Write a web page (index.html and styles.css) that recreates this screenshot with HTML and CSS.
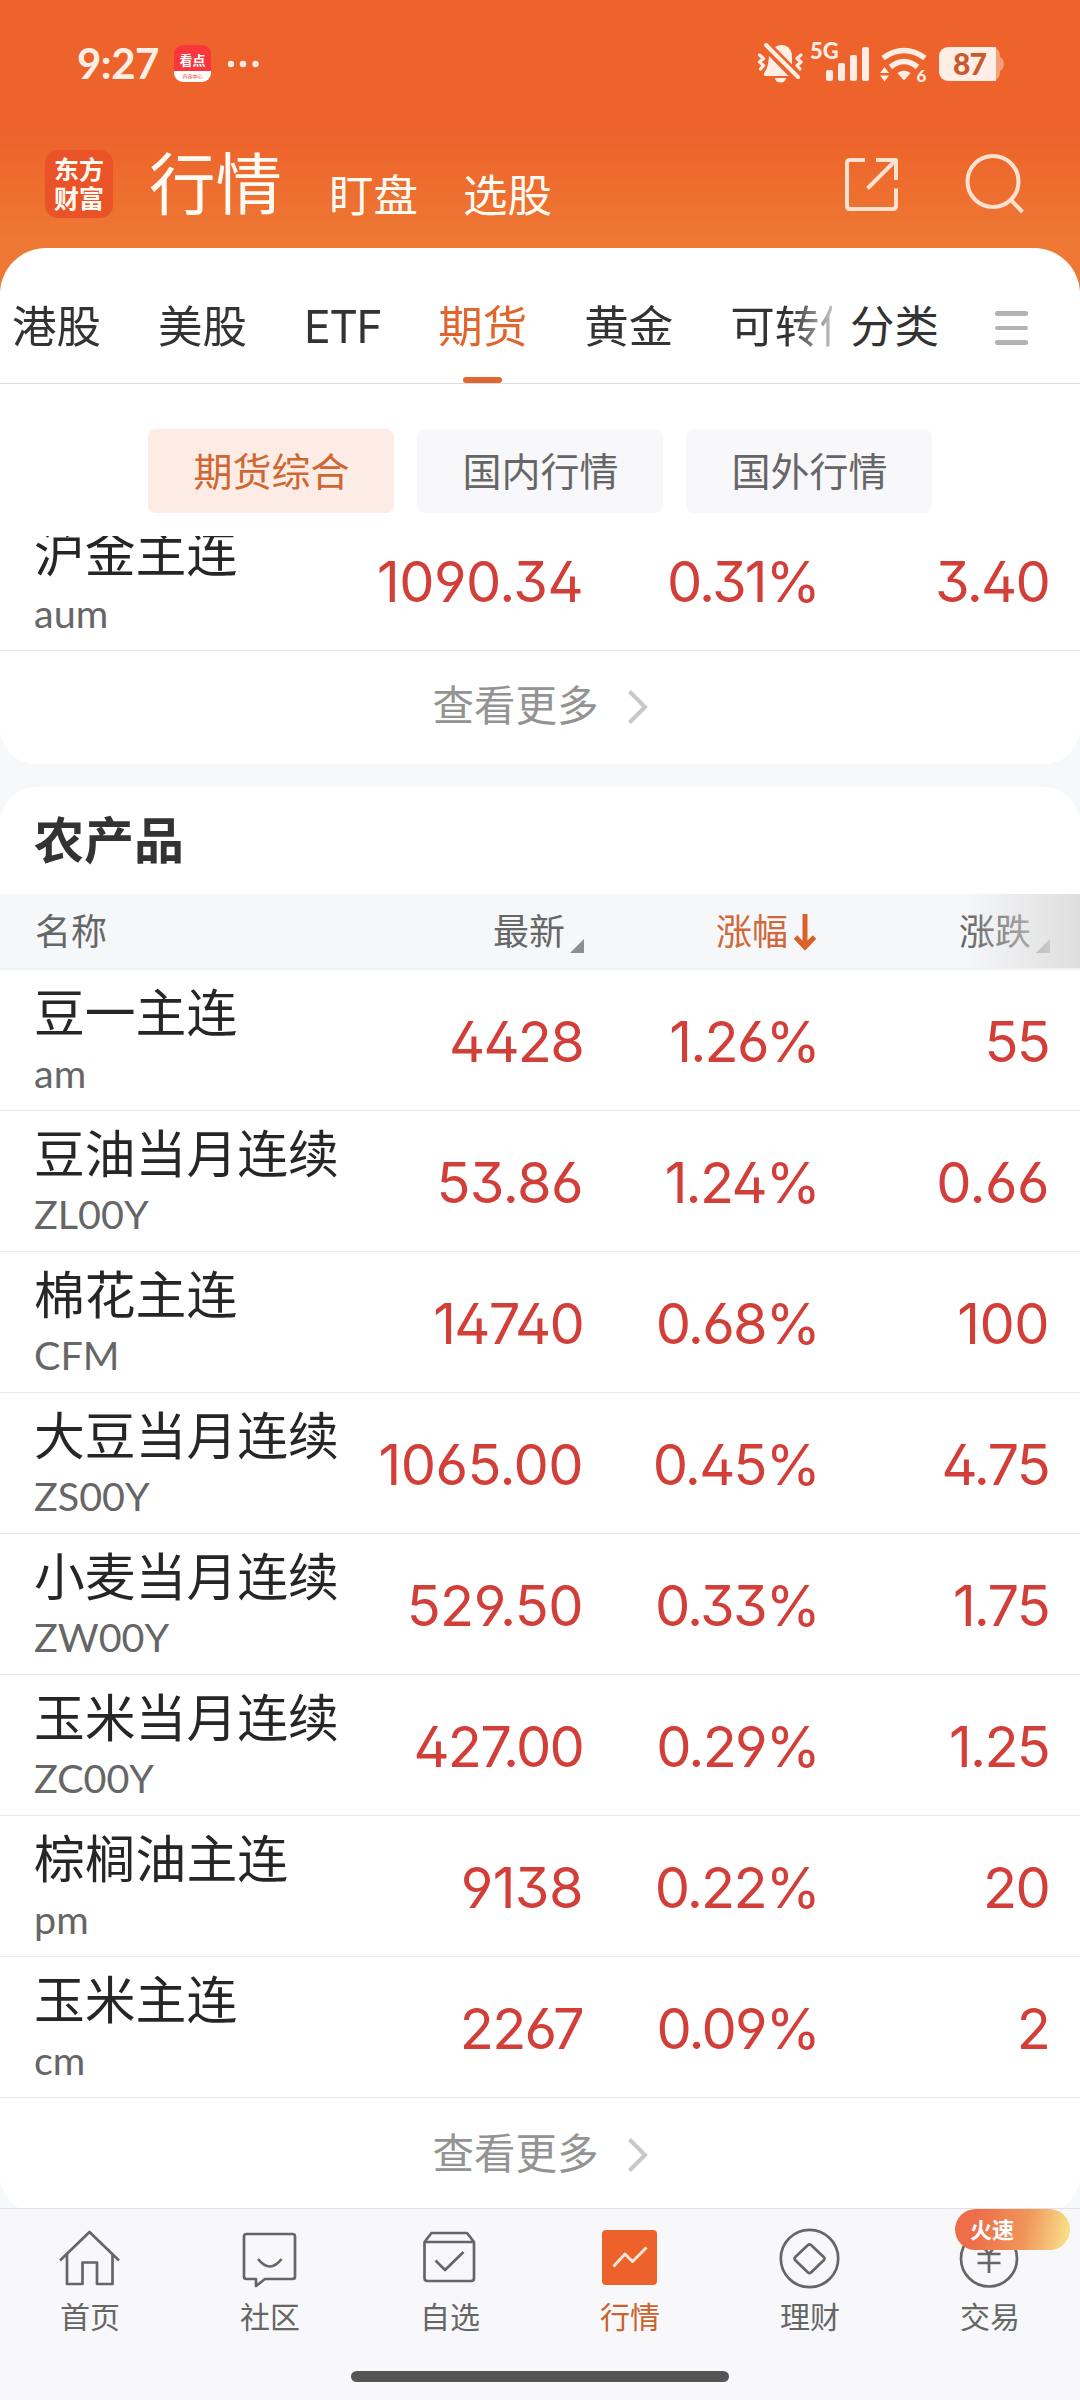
FILE: index.html
```html
<!DOCTYPE html>
<html lang="zh-CN">
<head>
<meta charset="utf-8">
<title>行情</title>
<link rel="stylesheet" href="styles.css">
</head>
<body>
<div class="screen">
  <header class="top">
    <div class="status">
      <span class="clock">9:27</span>
      <span class="app-badge"><b>看点</b><i>内容中心</i></span>
      <svg class="dots" width="32" height="8" viewBox="0 0 32 8"><circle cx="4" cy="4" r="3.2"/><circle cx="16" cy="4" r="3.2"/><circle cx="28.500" cy="4" r="3.2"/></svg>
      <svg class="status-icons" width="256" height="50" viewBox="754 38 256 50">
        <g fill="#ffeee6">
          <path d="M775 46q5-3 10-1.500 7 3 7 11v8z"/>
          <path d="M769 55L788.500 75h-24q-1.500-1.500 0-3.500 4-5.500 4.500-16.500z"/>
          <path d="M775 77h11a5.500 4.500 0 0 1-11 0z"/>
        </g>
        <g fill="none" stroke="#ffeee6" stroke-width="3.200" stroke-linecap="round" stroke-linejoin="round">
          <path d="M766 44l32 32" stroke-width="4"/>
          <path d="M759.500 54l4 3.500-4 3.500 4 3.500-3 3.500M801 54l-4 3.500 4 3.500-4 3.500 3 3.500"/>
        </g>
        <text class="net" x="810" y="57.500">5G</text>
        <g fill="#ffeee6">
          <rect x="826" y="69" width="7" height="11" rx="2"/><rect x="838" y="62" width="7" height="18" rx="2"/><rect x="850" y="54" width="7" height="26" rx="2"/><rect x="862" y="46" width="7" height="34" rx="2"/>
          <path d="M897.500 72q6.500-5 13 0l-5 6q-1.500 1.500-3 0z"/>
          <path d="M880 72l4.500-6 4.500 6zM880 74.500l4.500 6 4.500-6z"/>
        </g>
        <path d="M883 57q21-15 42 0M890.500 66q13.500-11 27 0" fill="none" stroke="#ffeee6" stroke-width="5.500"/>
        <text class="wifi-gen" x="916.500" y="81">6</text>
        <path d="M990 46q10 0 10 9v1q4 2 4 7t-4 7v1q0 9-10 9z" fill="#f4a07d"/>
        <path d="M948 46h48v34h-48a9 9 0 0 1-9-9V55a9 9 0 0 1 9-9z" fill="#ffeee6"/>
        <text class="charge" x="953" y="74">87</text>
      </svg>
    </div>
    <div class="title-bar">
      <span class="logo"><span>东方</span><span>财富</span></span>
      <h1>行情</h1>
      <span class="sub">盯盘</span>
      <span class="sub">选股</span>
      <svg class="actions" width="190" height="68" viewBox="840 150 190 68" fill="none" stroke="#ffe3d0" stroke-width="4">
        <path d="M865 160h-15q-3 0-3 3v43q0 3 3 3h43q3 0 3-3v-17.500M876 160h20v20M896 160l-28.500 28.500" stroke-linejoin="round"/>
        <circle cx="993" cy="181.500" r="25.500"/><path d="M1010.500 199.500l12 12.500"/>
      </svg>
    </div>
  </header>

  <main class="sheet">
    <nav class="tabs">
      <div class="tab-strip">
        <span>港股</span><span>美股</span><span class="latin">ETF</span><span class="on">期货</span><span>黄金</span><span>可转债</span>
      </div>
      <span class="category">分类</span>
      <span class="menu"><i></i><i></i><i></i></span>
    </nav>
    <div class="pills"><span class="on">期货综合</span><span>国内行情</span><span>国外行情</span></div>

    <div class="scroll">
      <section class="card first">
        <div class="row"><div class="name">沪金主连<small>aum</small></div><b class="loose">1090.34</b><b>0.31%</b><b>3.40</b></div>
        <div class="more">查看更多<svg width="22" height="36" viewBox="0 0 22 36"><path d="M2.500 2.500L18 18 2.500 33.500"/></svg></div>
      </section>
      <section class="card">
        <h2>农产品</h2>
        <div class="head">
          <span>名称</span>
          <span class="col">最新<i class="tri"></i></span>
          <span class="col sorted">涨幅<svg width="24" height="38" viewBox="0 0 24 38"><path d="M12 1v32M2.500 24L12 34l9.500-10"/></svg></span>
          <span class="col">涨跌<i class="tri"></i></span>
        </div>
        <div class="row"><div class="name">豆一主连<small>am</small></div><b>4428</b><b>1.26%</b><b>55</b></div>
        <div class="row"><div class="name">豆油当月连续<small>ZL00Y</small></div><b class="loose">53.86</b><b>1.24%</b><b class="loose">0.66</b></div>
        <div class="row"><div class="name">棉花主连<small>CFM</small></div><b>14740</b><b>0.68%</b><b class="loose">100</b></div>
        <div class="row"><div class="name">大豆当月连续<small>ZS00Y</small></div><b class="loose">1065.00</b><b>0.45%</b><b>4.75</b></div>
        <div class="row"><div class="name">小麦当月连续<small>ZW00Y</small></div><b class="loose">529.50</b><b>0.33%</b><b>1.75</b></div>
        <div class="row"><div class="name">玉米当月连续<small>ZC00Y</small></div><b>427.00</b><b>0.29%</b><b>1.25</b></div>
        <div class="row"><div class="name">棕榈油主连<small>pm</small></div><b class="loose">9138</b><b>0.22%</b><b>20</b></div>
        <div class="row"><div class="name">玉米主连<small>cm</small></div><b>2267</b><b>0.09%</b><b>2</b></div>
        <div class="more">查看更多<svg width="22" height="36" viewBox="0 0 22 36"><path d="M2.500 2.500L18 18 2.500 33.500"/></svg></div>
      </section>
    </div>
  </main>

  <footer class="dock">
    <div class="item"><svg width="64" height="64" viewBox="58 2226 64 64"><path d="M60 2260.500L89.500 2232l29.500 28.500M67 2254v30h15.500v-21.500h14.500v21.500h15.500v-30"/></svg>首页</div>
    <div class="item"><svg width="64" height="64" viewBox="238 2226 64 64"><path d="M246.500 2234h46q2.500 0 2.500 2.500v40q0 2.500-2.500 2.500H265l-9 7v-7h-9.500q-2.500 0-2.500-2.500v-40q0-2.500 2.500-2.500zM258 2259q12 15 23.500 0"/></svg>社区</div>
    <div class="item"><svg width="64" height="64" viewBox="418 2226 64 64"><path d="M424.500 2242l7-9h35.500l7 9v36q0 3-3 3H427.500q-3 0-3-3zM424.500 2242h49.500M435.500 2260.500l9.500 9.500 18.500-18"/></svg>自选</div>
    <div class="item on"><svg width="64" height="64" viewBox="598 2226 64 64"><rect x="602" y="2230" width="55" height="55" rx="4"/><path d="M613.500 2266.500L625 2254l7.500 7.500 14-14"/></svg>行情</div>
    <div class="item"><svg width="64" height="64" viewBox="778 2226 64 64"><circle cx="809.500" cy="2258.500" r="28.700"/><path d="M807.700 2245.300q1.800-2 3.600 0l12.400 11.700q1.800 1.500 0 3.300l-12.400 12q-1.800 1.700-3.600 0l-12.400-12q-1.800-1.800 0-3.300z"/></svg>理财</div>
    <div class="item"><svg width="64" height="64" viewBox="958 2226 64 64"><circle cx="989" cy="2258.500" r="28"/><path d="M977.500 2254h23M977.500 2263h23M989 2254v19M980 2243l9 11 9-11"/></svg>交易<em class="hot">火速</em></div>
    <div class="home-bar"></div>
  </footer>
</div>
</body>
</html>
```
FILE: styles.css
```css
* { box-sizing: border-box; }
body { margin: 0; font-family: Inter, "Noto Sans CJK SC", sans-serif; color: #333; }
i, em { font-style: normal; }
.screen { width: 1080px; height: 2400px; display: flex; flex-direction: column; overflow: hidden; background: linear-gradient(#ed632b 135px, #ee7834 240px); }

.top { height: 248px; flex: none; }
.status { height: 127px; display: flex; align-items: center; padding-left: 77px; }
.clock { width: 97px; font: 700 42px/46px Lato, sans-serif; letter-spacing: -0.500px; color: #ffeee6; padding-bottom: 2px; }
.app-badge { width: 37px; height: 37px; border-radius: 9px; overflow: hidden; background: linear-gradient(#f8363c 71%, #fff 71%); display: flex; flex-direction: column; align-items: center; color: #fff; }
.app-badge b { font-size: 13px; line-height: 31px; height: 26px; white-space: nowrap; }
.app-badge i { font-size: 5px; line-height: 11px; color: #e33; white-space: nowrap; }
.dots { margin-left: 16px; fill: #ffeee6; }
.status-icons { margin-left: 495px; }
.net, .wifi-gen, .charge { font-family: Lato, sans-serif; font-weight: 900; fill: #ffeee6; }
.net { font-size: 22px; }
.wifi-gen { font-size: 17px; }
.charge { font-size: 30px; letter-spacing: -1px; fill: #c85a2e; }

.title-bar { height: 121px; display: flex; align-items: flex-start; padding: 23px 0 0 45px; color: #fffaf2; }
.logo { width: 68px; height: 68px; border-radius: 13px; background: #ea5328; display: flex; flex-direction: column; align-items: center; padding-top: 4px; font: 700 25px/29px "Noto Sans CJK SC", sans-serif; }
h1 { margin: -20px 0 0 36px; font: 400 66.500px/100px "Noto Sans CJK SC", sans-serif; }
.sub { margin: 8px 0 0 47px; font-size: 44.500px; line-height: 76px; }
.sub + .sub { margin-left: 45px; }
.actions { margin-left: 288px; }

.sheet { flex: 1; min-height: 0; background: #fff; border-radius: 46px 46px 0 0; display: flex; flex-direction: column; }
.tabs { height: 136px; flex: none; display: flex; border-bottom: 1px solid #ddd; line-height: 158px; font-size: 44.500px; }
.tab-strip { width: 832px; padding-left: 12px; display: flex; gap: 57px; overflow: hidden; white-space: nowrap; -webkit-mask-image: linear-gradient(90deg, #000 790px, transparent 850px); mask-image: linear-gradient(90deg, #000 790px, transparent 850px); }
.tab-strip span { position: relative; flex: none; }
.tab-strip .latin { letter-spacing: -1.500px; }
.tab-strip .on { color: #e0652f; }
.tab-strip .on::after { content: ""; position: absolute; left: 25px; bottom: 0; width: 39px; height: 6px; border-radius: 3px; background: #e0652f; }
.tab-strip, .category { height: 135px; }
.category { margin-left: 18px; }
.menu { margin: 63px 0 0 56px; display: flex; flex-direction: column; gap: 10px; }
.menu i { width: 33px; height: 4.500px; border-radius: 2px; background: #b3b3b3; }
.pills { height: 152px; flex: none; padding-top: 45px; display: flex; justify-content: center; gap: 23px; font-size: 39px; line-height: 85px; }
.pills span { width: 246px; height: 84px; padding-left: 1px; border-radius: 8px; background: #f8f8fa; color: #666; text-align: center; }
.pills .on { background: #fcece5; color: #cf6733; }

.scroll { flex: 1; min-height: 0; overflow: hidden; background: #f7f8fa; display: flex; flex-direction: column; gap: 23px; }
.card { flex: none; background: #fff; border-radius: 36px; overflow: hidden; }
.card.first { border-radius: 0 0 36px 36px; }
.first .row { margin-top: -26px; }
.row { height: 141px; display: grid; grid-template-columns: 320px 263px 236px 230px; border-bottom: 1px solid #e9e9e9; }
.name { padding: 6px 0 0 34px; font-size: 50.800px; line-height: 76px; color: #262626; white-space: nowrap; }
.name small { display: block; font: 39.500px/42px Lato, sans-serif; color: #666; }
.row b { font-weight: 400; font-size: 56px; letter-spacing: -1.800px; font-feature-settings: "ss01"; line-height: 144px; text-align: right; color: #d23f38; }
.row .loose { letter-spacing: -0.600px; }
.more { height: 114px; display: flex; justify-content: center; align-items: center; gap: 28px; font-size: 41.500px; line-height: 60px; padding: 0 0 3px 1px; color: #939393; }
.first .more { height: 113px; }
.more svg { margin-top: 2px; fill: none; stroke: #c8c8c8; stroke-width: 4; }
h2 { margin: 0; height: 107px; padding-left: 34px; font: 700 50px/101px "Noto Sans CJK SC", sans-serif; color: #333; }
.head { height: 76px; position: relative; display: grid; grid-template-columns: 320px 264px 233px 233px; background: #f6f7f9; border-bottom: 2px solid #f1f2f4; font-size: 36px; line-height: 76px; color: #666; }
.head > span:first-child { padding-left: 35px; }
.head::after { content: ""; position: absolute; inset: 0 0 0 auto; width: 115px; background: linear-gradient(90deg, rgba(222,222,222,0), rgba(222,222,222,1)); }
.col { display: flex; justify-content: flex-end; align-items: center; gap: 5px; }
.tri { width: 14px; height: 14px; margin-top: 28px; background: #8d8d92; clip-path: polygon(100% 0, 100% 100%, 0 100%); }
.sorted { color: #d0683a; }
.sorted svg { fill: none; stroke: #d9622b; stroke-width: 5; }

.dock { height: 192px; flex: none; position: relative; background: #f8f8fa; border-top: 1px solid #e1e1e3; display: grid; grid-template-columns: repeat(6, 180px); }
.item { position: relative; padding-top: 17px; display: flex; flex-direction: column; align-items: center; font-size: 30px; line-height: 54px; color: #666; }
.item svg { fill: none; stroke: #666; stroke-width: 2.700; stroke-linejoin: round; }
.item.on { color: #c9622f; }
.item.on rect { fill: #ed622b; stroke: none; }
.item.on path { stroke: #ffe6d8; stroke-width: 3; }
.hot { position: absolute; left: 55px; top: 0; width: 115px; height: 41px; padding-left: 15px; border-radius: 21px; background: linear-gradient(100deg, #ee6e4a 20%, #f0955a 60%, #f8dc86 95%); color: #fff; font-weight: 700; font-size: 22px; line-height: 43px; }
.home-bar { position: absolute; left: 351px; top: 162px; width: 378px; height: 11px; border-radius: 6px; background: #555; }
```
